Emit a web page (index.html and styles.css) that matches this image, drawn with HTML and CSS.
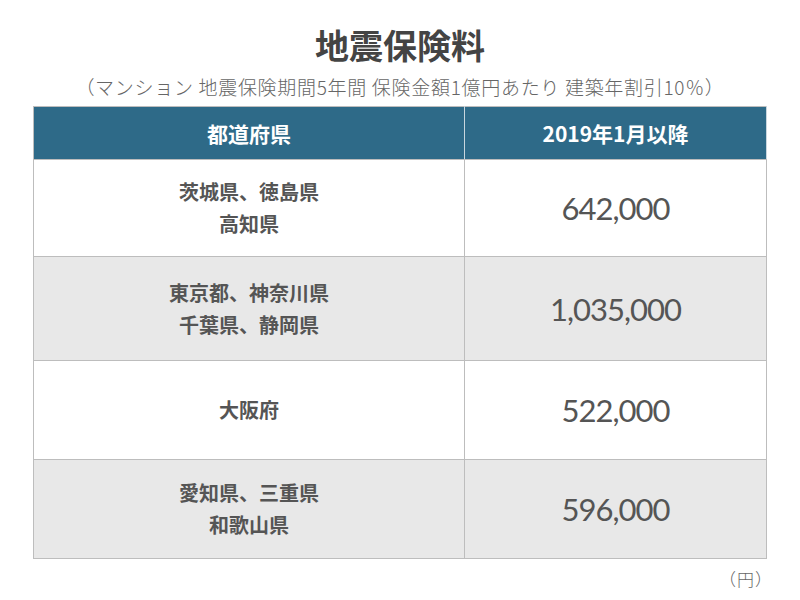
FILE: index.html
```html
<!DOCTYPE html>
<html lang="ja">
<head>
<meta charset="utf-8">
<link rel="stylesheet" href="styles.css">
</head>
<body>
<div class="page">
  <h1 class="title">地震保険料</h1>
  <p class="subtitle">（マンション 地震保険期間5年間 保険金額1億円あたり 建築年割引10％）</p>
  <table class="rates">
    <thead>
      <tr class="head">
        <th class="col-pref">都道府県</th>
        <th class="col-val">2019年1月以降</th>
      </tr>
    </thead>
    <tbody>
      <tr class="r1">
        <td class="pref">茨城県、徳島県<br>高知県</td>
        <td class="val">642,000</td>
      </tr>
      <tr class="r2 alt">
        <td class="pref">東京都、神奈川県<br>千葉県、静岡県</td>
        <td class="val">1,035,000</td>
      </tr>
      <tr class="r3">
        <td class="pref">大阪府</td>
        <td class="val">522,000</td>
      </tr>
      <tr class="r4 alt">
        <td class="pref">愛知県、三重県<br>和歌山県</td>
        <td class="val">596,000</td>
      </tr>
    </tbody>
  </table>
  <p class="unit">（円）</p>
</div>
</body>
</html>
```

FILE: styles.css
```css
html, body {
  margin: 0;
  padding: 0;
  background: #ffffff;
}
body {
  font-family: "Noto Sans CJK JP", "Noto Sans", sans-serif;
  color: #555555;
}
.page {
  width: 800px;
  height: 600px;
  box-sizing: border-box;
  padding-top: 24px;
  overflow: hidden;
}
.title {
  margin: 0;
  text-align: center;
  font-size: 34px;
  line-height: 42px;
  font-weight: 700;
  color: #444444;
}
.subtitle {
  margin: 9px 0 0 0;
  text-align: center;
  font-size: 19px;
  line-height: 24px;
  font-weight: 300;
  letter-spacing: 0.7px;
  color: #666666;
}
.rates {
  margin: 7px 0 0 33px;
  width: 734px;
  border-collapse: collapse;
  table-layout: fixed;
}
.rates th,
.rates td {
  border: 1px solid #bdbdbd;
  padding: 0;
  text-align: center;
  vertical-align: middle;
}
.col-pref { width: 430px; }
.head th {
  background: #2e6a88;
  color: #ffffff;
  font-weight: 700;
  font-size: 21px;
  height: 52px;
  border-color: #bdbdbd #c9d6de #bdbdbd #bdbdbd;
}
.head th.col-val { border-left-color: #c9d6de; }
.pref {
  font-size: 20px;
  font-weight: 700;
  line-height: 32px;
  color: #555555;
}
.val {
  font-family: "Lato", "Noto Sans", sans-serif;
  font-size: 31px;
  font-weight: 400;
  letter-spacing: -1px;
  color: #555555;
}
.alt td { background: #e8e8e8; }
.r1 td { height: 96px; }
.r2 td { height: 103px; }
.r3 td { height: 98px; }
.r4 td { height: 98px; }
.unit {
  margin: 9px 0 0 0;
  width: 773px;
  text-align: right;
  font-size: 17px;
  line-height: 22px;
  font-weight: 300;
  letter-spacing: 1px;
  color: #666666;
}
```
